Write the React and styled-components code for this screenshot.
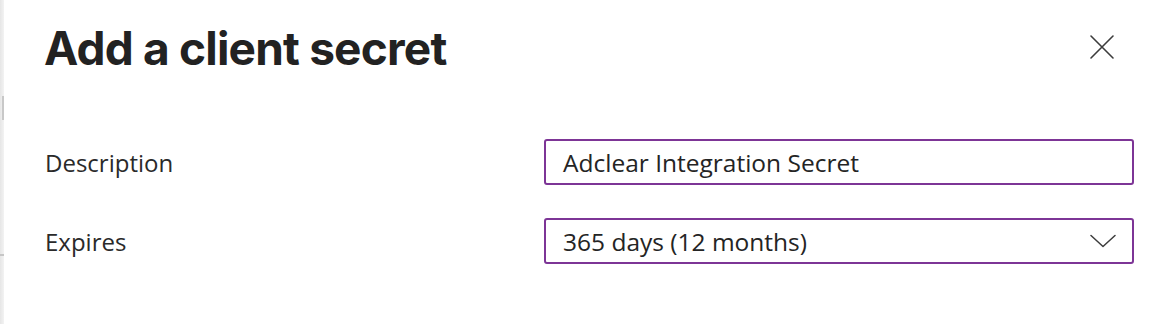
import React from "react";
import styled, { createGlobalStyle } from "styled-components";

const GlobalStyle = createGlobalStyle`
  html, body {
    margin: 0;
    padding: 0;
    background: #fff;
  }
  body {
    font-family: "Open Sans", "Noto Sans", sans-serif;
    color: #242424;
  }
`;

const Page = styled.div`
  display: flex;
  width: 1174px;
  height: 324px;
  overflow: hidden;
`;

const EdgeStrip = styled.div`
  position: relative;
  width: 4px;
  flex: none;
  background: linear-gradient(to right, #e6e6e6, #f3f3f3);

  &::before {
    content: "";
    position: absolute;
    left: 2px;
    top: 96px;
    width: 2px;
    height: 24px;
    background: #c8c8c8;
  }

  &::after {
    content: "";
    position: absolute;
    left: 0;
    top: 254px;
    width: 4px;
    height: 2px;
    background: #c6c6c6;
  }
`;

const Panel = styled.div`
  flex: 1;
  padding: 18px 40px 0 40px;
`;

const Header = styled.div`
  display: flex;
  align-items: flex-start;
  justify-content: space-between;
`;

const Title = styled.h1`
  margin: 0;
  font-family: Inter, "Liberation Sans", sans-serif;
  font-weight: 700;
  font-size: 46px;
  letter-spacing: -0.8px;
  line-height: 60px;
  color: #222;
`;

const CloseButton = styled.button`
  border: none;
  background: none;
  padding: 0;
  margin: 16px 19px 0 0;
  width: 26px;
  height: 26px;
  color: #3c3c3c;
  cursor: pointer;
`;

const Form = styled.div`
  display: flex;
  flex-direction: column;
  gap: 33px;
  margin-top: 61px;
`;

const Row = styled.div`
  display: flex;
  align-items: center;
  justify-content: space-between;
`;

const Label = styled.label`
  font-size: 24px;
  color: #2a2a2a;
  padding-left: 1px;
`;

const Field = styled.div`
  box-sizing: border-box;
  width: 590px;
  height: 46px;
  display: flex;
  align-items: center;
  justify-content: space-between;
  border: 2px solid #7d3596;
  border-radius: 3px;
  padding: 0 16px 0 17px;
  font-size: 24.5px;
  color: #242424;
`;

const Chevron = styled.svg`
  width: 26px;
  height: 14px;
  color: #3c3c3c;
`;

export default function App() {
  return (
    <>
      <GlobalStyle />
      <Page>
        <EdgeStrip />
        <Panel>
          <Header>
            <Title>Add a client secret</Title>
            <CloseButton aria-label="Close">
              <svg viewBox="0 0 26 26" width="26" height="26" fill="none">
                <path
                  d="M2 2L24 24M24 2L2 24"
                  stroke="currentColor"
                  strokeWidth="1.6"
                  strokeLinecap="round"
                />
              </svg>
            </CloseButton>
          </Header>

          <Form>
            <Row>
              <Label>Description</Label>
              <Field>Adclear Integration Secret</Field>
            </Row>
            <Row>
              <Label>Expires</Label>
              <Field>
                <span>365 days (12 months)</span>
                <Chevron viewBox="0 0 26 14" fill="none">
                  <path
                    d="M1 1.5L13 12.5L25 1.5"
                    stroke="currentColor"
                    strokeWidth="1.5"
                    strokeLinecap="round"
                    strokeLinejoin="round"
                  />
                </Chevron>
              </Field>
            </Row>
          </Form>
        </Panel>
      </Page>
    </>
  );
}
